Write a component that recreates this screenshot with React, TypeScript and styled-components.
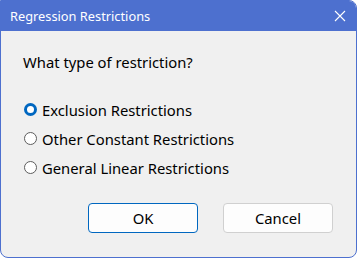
import styled, { createGlobalStyle } from "styled-components";

const Global = createGlobalStyle`
    html, body {
        margin: 0;
        padding: 0;
        background: #ffffff;
    }
    body {
        font-family: "Noto Sans", "Open Sans", sans-serif;
    }
`

const Window = styled.div`
    display: flex;
    flex-direction: column;
    width: 357px;
    height: 258px;
    box-sizing: border-box;
    border: 1px solid #4d70cf;
    border-radius: 0 8px 8px 8px;
    overflow: hidden;
    background-color: #f0f0f0;
`

const TitleBar = styled.div`
    display: flex;
    align-items: center;
    justify-content: space-between;
    height: 30px;
    padding: 0 9px 0 9px;
    background-color: #4d70cf;
    color: #ffffff;
    font-size: 12.8px;
`

const CloseBtn = styled.div`
    display: flex;
    align-items: center;
    justify-content: center;
    width: 14px;
    height: 14px;
`

const Body = styled.div`
    flex: 1;
    display: flex;
    flex-direction: column;
    padding: 20px 0 0 22px;
    color: #000000;
    font-size: 14.8px;
`

const Question = styled.div`
    height: 22px;
    line-height: 22px;
`

const Options = styled.div`
    display: flex;
    flex-direction: column;
    margin-top: 22px;
`

const Option = styled.label`
    display: flex;
    align-items: center;
    height: 29px;
`

const Radio = styled.span<{ $on?: boolean }>`
    box-sizing: border-box;
    width: 13px;
    height: 13px;
    margin: 0 5px 0 1px;
    border-radius: 50%;
    border: ${p => p.$on ? "3.5px solid #0067c0" : "1px solid #5d5d5d"};
    background: #ffffff;
`

const Buttons = styled.div`
    display: flex;
    gap: 25px;
    margin: 21px 0 0 65px;
`

const Button = styled.button<{ $primary?: boolean }>`
    width: 110px;
    height: 30px;
    border-radius: 4px;
    border: 1px solid ${p => p.$primary ? "#0067c0" : "#d0d0d0"};
    background: #fdfdfd;
    color: #000000;
    font-family: inherit;
    font-size: 14.8px;
    padding: 0;
`

export default function App() {
    return (
        <>
            <Global />
            <Window>
                <TitleBar>
                    <span>Regression Restrictions</span>
                    <CloseBtn>
                        <svg width="12" height="12" viewBox="0 0 12 12">
                            <path d="M1 1 L11 11 M11 1 L1 11" stroke="#ffffff" strokeWidth="1.1" />
                        </svg>
                    </CloseBtn>
                </TitleBar>
                <Body>
                    <Question>What type of restriction?</Question>
                    <Options>
                        <Option><Radio $on />Exclusion Restrictions</Option>
                        <Option><Radio />Other Constant Restrictions</Option>
                        <Option><Radio />General Linear Restrictions</Option>
                    </Options>
                    <Buttons>
                        <Button $primary>OK</Button>
                        <Button>Cancel</Button>
                    </Buttons>
                </Body>
            </Window>
        </>
    )
}
